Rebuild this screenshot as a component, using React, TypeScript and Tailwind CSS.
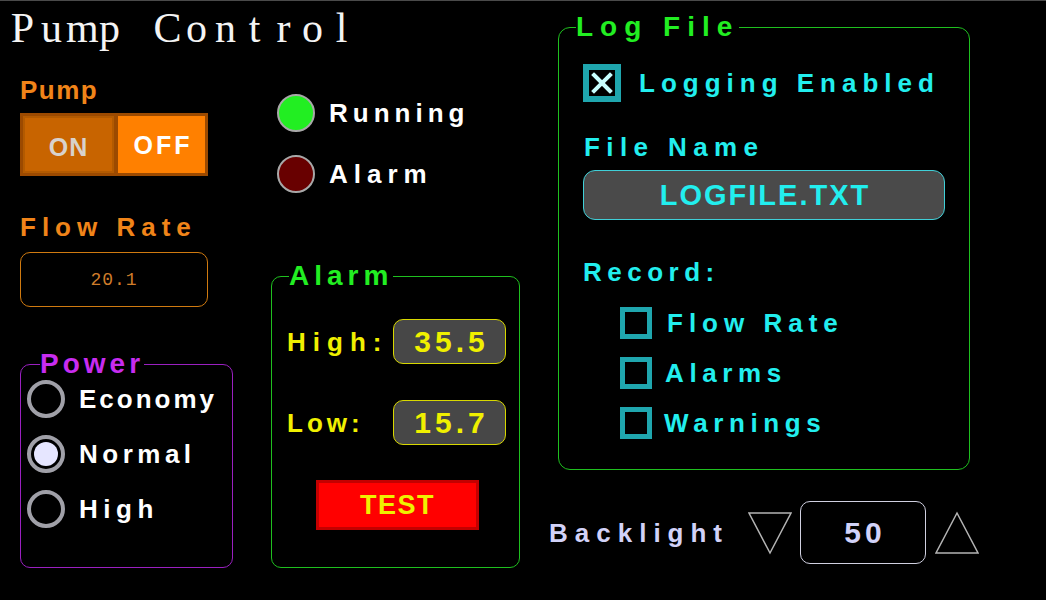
import React from "react";

function Radio({ label, checked, track }: { label: string; checked?: boolean; track: string }) {
  return (
    <div className="flex items-center">
      <div className="w-[38px] h-[38px] rounded-full border-[4px] border-[#a0a0a8] flex items-center justify-center shrink-0">
        {checked && <div className="w-[24px] h-[24px] rounded-full bg-[#e6e6ff]" />}
      </div>
      <span className={"ml-[14px] text-[26px] leading-[30px] text-white " + track}>{label}</span>
    </div>
  );
}

function Box({ checked }: { checked?: boolean }) {
  if (checked) {
    return (
      <div className="w-[38px] h-[38px] border-[6px] border-[#1fa6ae] flex items-center justify-center shrink-0">
        <svg width="24" height="24" viewBox="0 0 24 24">
          <path d="M4 4 L20 20 M20 4 L4 20" stroke="#c8ffff" strokeWidth="4" strokeLinecap="square" />
        </svg>
      </div>
    );
  }
  return <div className="w-[32px] h-[32px] border-[5px] border-[#1fa6ae] shrink-0" />;
}

const TITLE = "Pump Control".split("");

export default function App() {
  return (
    <div className="w-[1046px] h-[600px] bg-black border-t border-[#4a4a4a] flex overflow-hidden font-['Liberation_Sans',Arial,sans-serif] font-bold">
      {/* Left region */}
      <div className="w-[540px] shrink-0 flex flex-col">
        <div className="pl-[8px] pt-[5px] h-[50px] flex text-[42px] leading-[44px] font-['Liberation_Serif','Times_New_Roman',serif] font-normal text-[#f4f4f4] whitespace-pre">
          {TITLE.map((c, i) => (
            <span key={i} className="inline-block w-[29px] text-center">{c}</span>
          ))}
        </div>
        <div className="flex items-start">
          {/* Column A */}
          <div className="ml-[20px] w-[213px] flex flex-col">
            <div className="mt-[24px] text-[26px] leading-[30px] tracking-[1.5px] text-[#f08419]">Pump</div>
            <div className="mt-[8px] w-[188px] h-[63px] bg-[#9c4a00] p-[3px] flex gap-[4px]">
              <div className="flex-1 bg-[#c86400] border-[2px] border-[#b35a00] flex items-center justify-center pt-[4px]">
                <span className="text-[25px] leading-[30px] tracking-[1px] text-[#d8d2cc]">ON</span>
              </div>
              <div className="flex-1 bg-[#ff8000] flex items-center justify-center">
                <span className="text-[25px] leading-[30px] tracking-[3px] text-white pl-[3px]">OFF</span>
              </div>
            </div>
            <div className="mt-[36px] text-[26px] leading-[30px] tracking-[6px] text-[#f08419]">Flow Rate</div>
            <div className="mt-[10px] w-[188px] h-[55px] border border-[#d07a10] rounded-[10px] flex items-center justify-center">
              <span className="font-['Liberation_Mono','Courier_New',monospace] font-normal text-[18px] leading-[20px] tracking-[1px] text-[#cf7c2a]">20.1</span>
            </div>
            <fieldset className="mt-[42px] w-[213px] h-[219px] border border-[#9a20c0] rounded-[10px]">
              <legend className="ml-[19px] text-[28px] leading-[30px] tracking-[4px] text-[#c82cf0]">Power</legend>
              <div className="pl-[6px] flex flex-col gap-[17px] mt-[1px]">
                <Radio label="Economy" track="tracking-[3px]" />
                <Radio label="Normal" checked track="tracking-[4.5px]" />
                <Radio label="High" track="tracking-[5.5px]" />
              </div>
            </fieldset>
          </div>
          {/* Column B */}
          <div className="ml-[38px] w-[249px] flex flex-col">
            <div className="mt-[43px] ml-[6px] flex items-center">
              <div className="w-[38px] h-[38px] rounded-full bg-[#22ee22] border-2 border-[#a8a8a8]" />
              <span className="ml-[14px] text-[26px] leading-[30px] tracking-[5px] text-white">Running</span>
            </div>
            <div className="mt-[23px] ml-[6px] flex items-center">
              <div className="w-[38px] h-[38px] rounded-full bg-[#680000] border-2 border-[#a8a8a8]" />
              <span className="ml-[14px] text-[26px] leading-[30px] tracking-[6px] text-white">Alarm</span>
            </div>
            <fieldset className="mt-[68px] w-[249px] h-[307px] border border-[#1fbf1f] rounded-[10px]">
              <legend className="ml-[17px] text-[28px] leading-[30px] tracking-[5px] text-[#22ee22]">Alarm</legend>
              <div className="pl-[15px] flex flex-col">
                <div className="mt-[28px] flex items-center">
                  <span className="w-[106px] text-[26px] leading-[30px] tracking-[7px] text-[#f0f000]">High:</span>
                  <div className="w-[113px] h-[45px] bg-[#474747] border border-[#d8d800] rounded-[10px] flex items-center justify-center">
                    <span className="text-[30px] leading-[34px] tracking-[4px] pl-[4px] text-[#f0f000]">35.5</span>
                  </div>
                </div>
                <div className="mt-[36px] flex items-center">
                  <span className="w-[106px] text-[26px] leading-[30px] tracking-[4px] text-[#f0f000]">Low:</span>
                  <div className="w-[113px] h-[45px] bg-[#474747] border border-[#d8d800] rounded-[10px] flex items-center justify-center">
                    <span className="text-[30px] leading-[34px] tracking-[4px] pl-[4px] text-[#f0f000]">15.7</span>
                  </div>
                </div>
                <div className="mt-[35px] ml-[29px] w-[163px] h-[50px] bg-[#ff0000] border-[3px] border-[#c40000] flex items-center justify-center">
                  <span className="text-[27px] leading-[30px] tracking-[1.5px] text-[#f0f000]">TEST</span>
                </div>
              </div>
            </fieldset>
          </div>
        </div>
      </div>

      {/* Right region */}
      <div className="ml-[9px] w-[440px] shrink-0 flex flex-col">
        <fieldset className="mt-[11px] ml-[9px] w-[412px] h-[458px] border border-[#1fbf1f] rounded-[12px]">
          <legend className="ml-[17px] text-[28px] leading-[30px] tracking-[7px] text-[#22ee22]">Log File</legend>
          <div className="pl-[24px] flex flex-col">
            <div className="mt-[22px] flex items-center">
              <Box checked />
              <span className="ml-[18px] text-[26px] leading-[30px] tracking-[6px] text-[#22eeee]">Logging Enabled</span>
            </div>
            <div className="mt-[30px] ml-[1px] text-[26px] leading-[30px] tracking-[6.4px] text-[#22eeee]">File Name</div>
            <div className="mt-[8px] w-[362px] h-[50px] bg-[#4a4a4a] border border-[#40d0d8] rounded-[12px] flex items-center justify-center">
              <span className="text-[29px] leading-[34px] tracking-[2px] pl-[2px] text-[#22eeee]">LOGFILE.TXT</span>
            </div>
            <div className="mt-[37px] text-[26px] leading-[30px] tracking-[5.5px] text-[#22eeee]">Record:</div>
            <div className="mt-[20px] ml-[37px] flex flex-col gap-[18px]">
              <div className="flex items-center">
                <Box />
                <span className="ml-[15px] text-[26px] leading-[30px] tracking-[6px] text-[#22eeee]">Flow Rate</span>
              </div>
              <div className="flex items-center">
                <Box />
                <span className="ml-[13px] text-[26px] leading-[30px] tracking-[5.6px] text-[#22eeee]">Alarms</span>
              </div>
              <div className="flex items-center">
                <Box />
                <span className="ml-[12px] text-[26px] leading-[30px] tracking-[5.6px] text-[#22eeee]">Warnings</span>
              </div>
            </div>
          </div>
        </fieldset>
        <div className="mt-[31px] flex items-center h-[63px]">
          <span className="w-[199px] text-[26px] leading-[30px] tracking-[7px] text-[#d2d2f8]">Backlight</span>
          <svg width="44" height="44" viewBox="0 0 44 44" className="shrink-0">
            <polygon points="1,2 43,2 22,42" fill="none" stroke="#b4b4b4" strokeWidth="1.5" />
          </svg>
          <div className="ml-[8px] w-[126px] h-[63px] border border-[#d0d0e0] rounded-[10px] flex items-center justify-center">
            <span className="text-[30px] leading-[34px] tracking-[4px] pl-[4px] text-[#d2d2f8]">50</span>
          </div>
          <svg width="44" height="44" viewBox="0 0 44 44" className="ml-[9px] shrink-0">
            <polygon points="22,2 43,42 1,42" fill="none" stroke="#b4b4b4" strokeWidth="1.5" />
          </svg>
        </div>
      </div>
    </div>
  );
}
